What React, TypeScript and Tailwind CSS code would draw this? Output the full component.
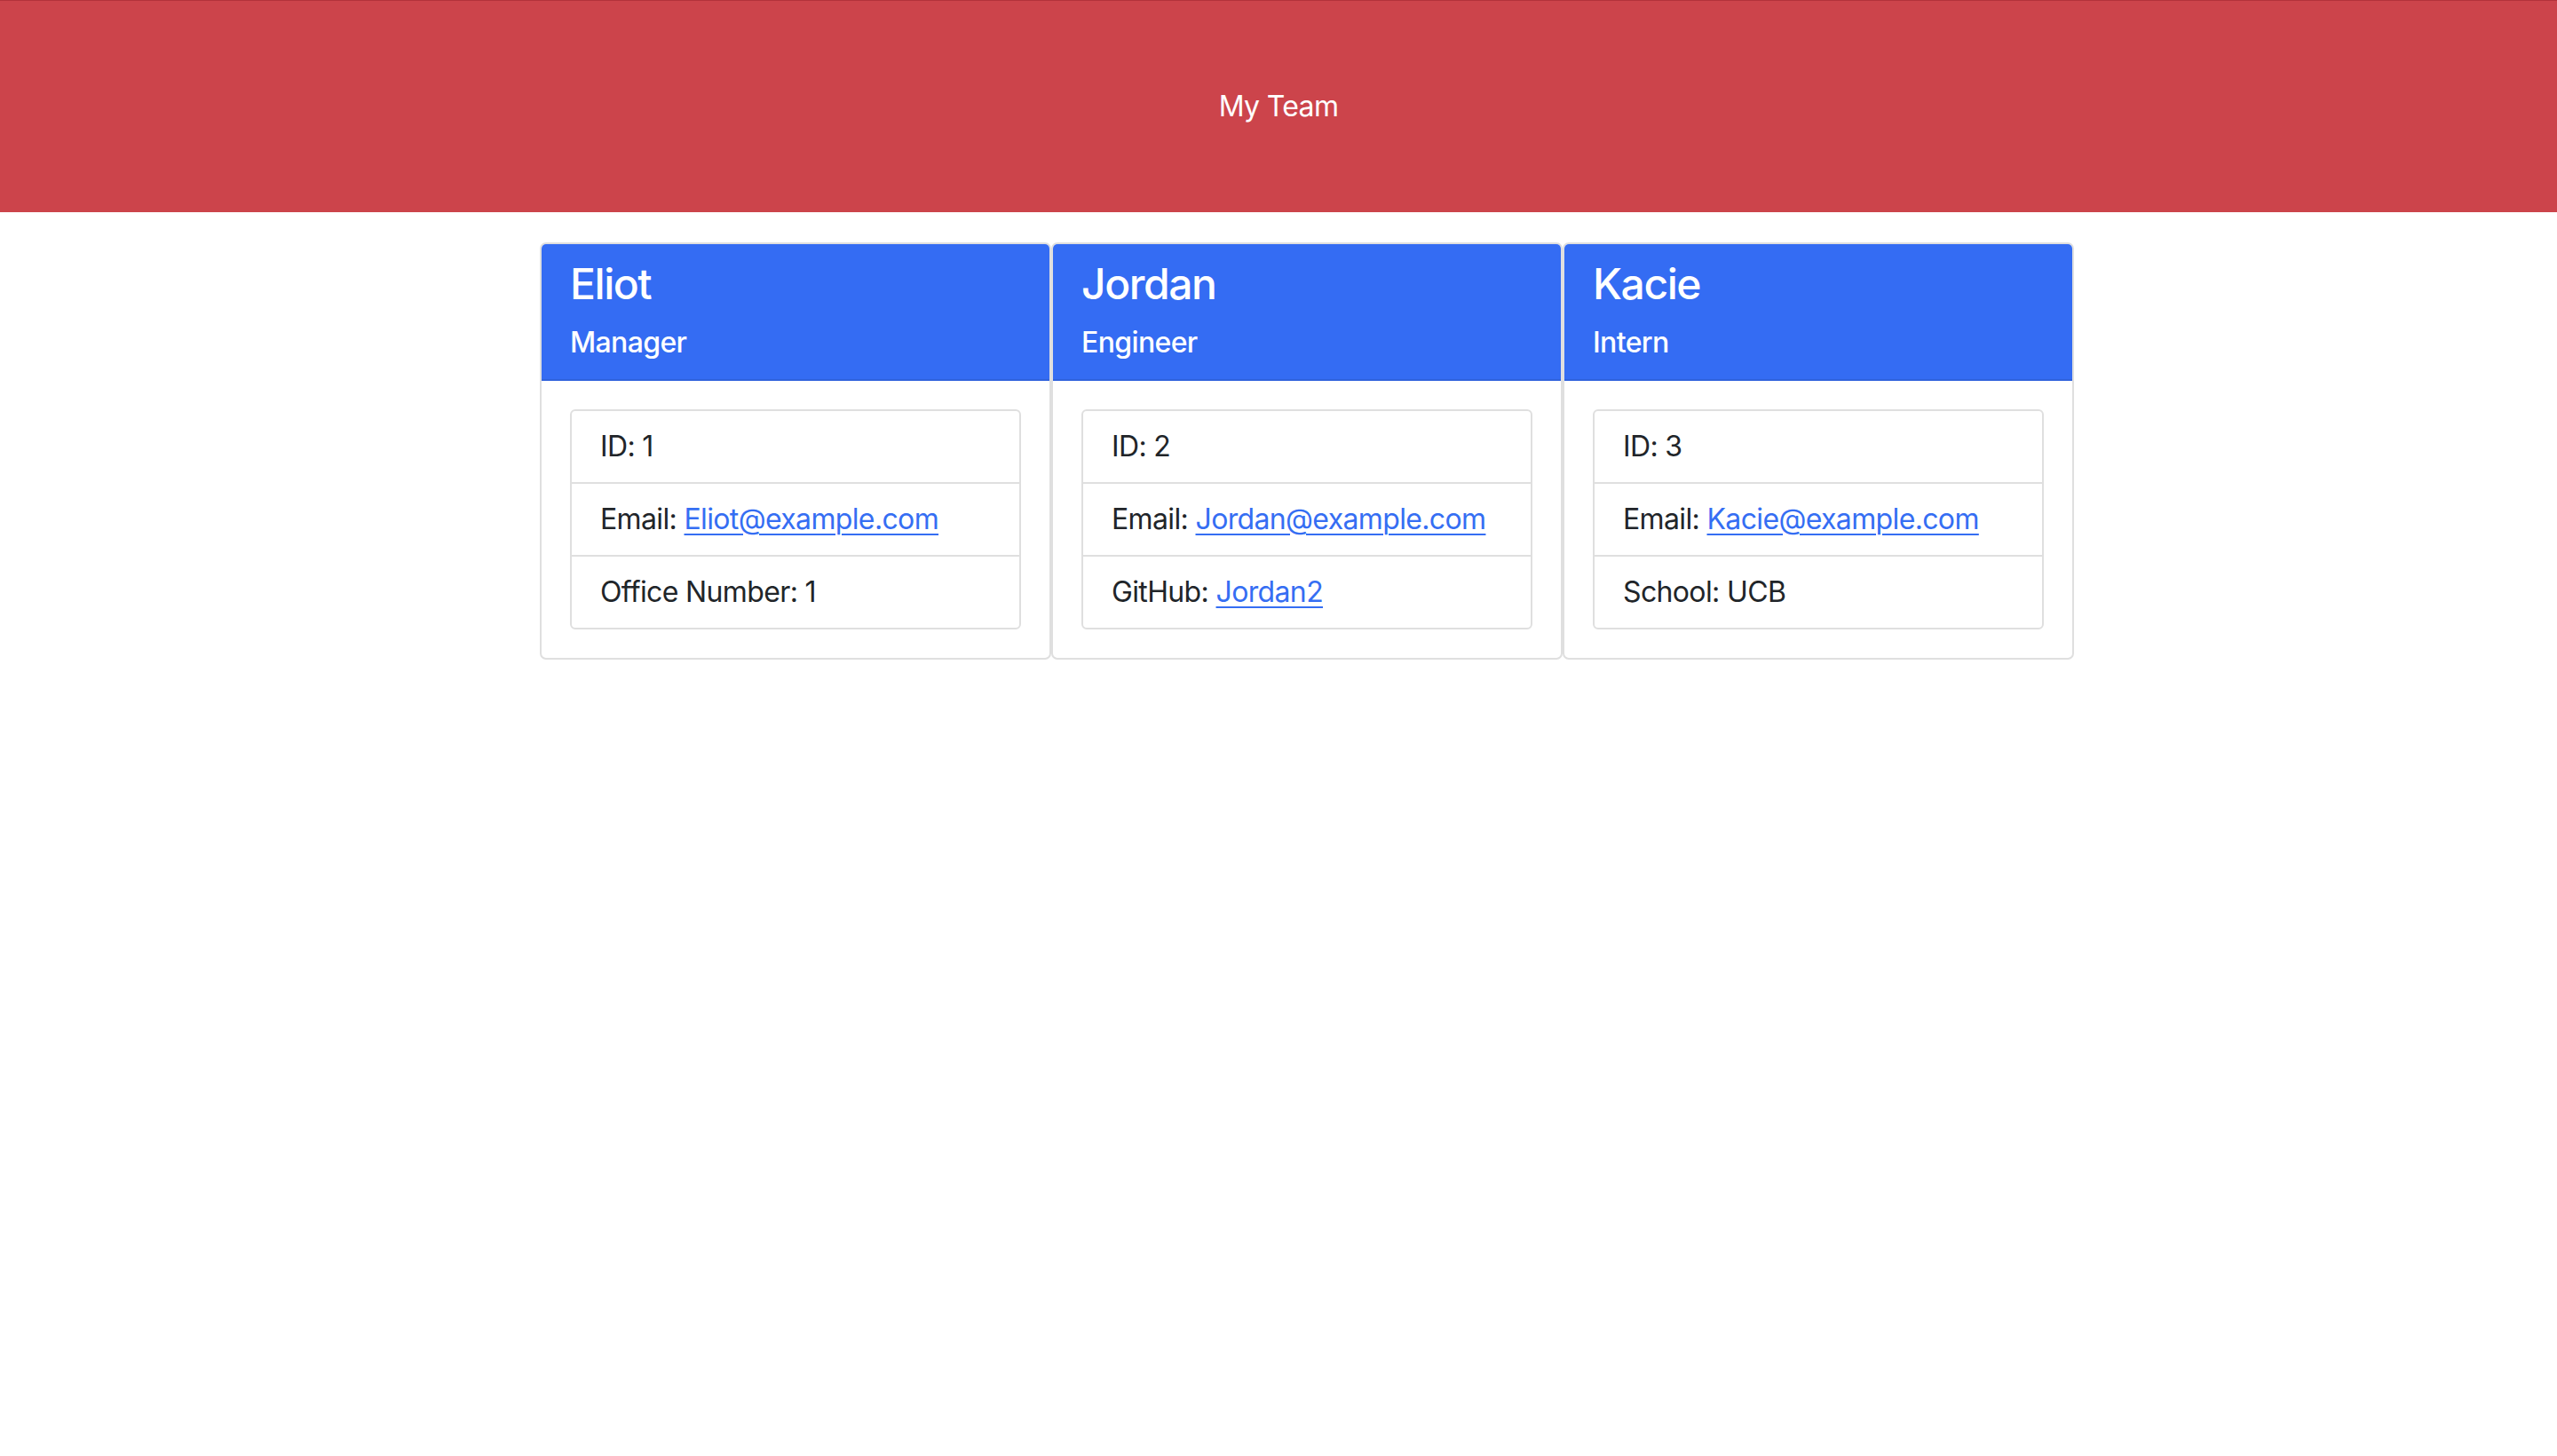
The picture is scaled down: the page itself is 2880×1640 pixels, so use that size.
import React from "react";

type Member = {
  name: string;
  role: string;
  id: number;
  email: string;
  extraLabel: string;
  extraValue: string;
  extraLink?: boolean;
};

const team: Member[] = [
  { name: "Eliot", role: "Manager", id: 1, email: "Eliot@example.com", extraLabel: "Office Number", extraValue: "1" },
  { name: "Jordan", role: "Engineer", id: 2, email: "Jordan@example.com", extraLabel: "GitHub", extraValue: "Jordan2", extraLink: true },
  { name: "Kacie", role: "Intern", id: 3, email: "Kacie@example.com", extraLabel: "School", extraValue: "UCB" },
];

function Card({ m }: { m: Member }) {
  return (
    <div className="w-[576px] shrink-0 border-2 border-[#dfdfdf] rounded-[7px] bg-white overflow-hidden">
      <div className="bg-[#346cf3] text-white px-8 pt-4 pb-[22px] border-b-2 border-[#2f62dc]">
        <h4 className="text-[48px] leading-[58px] font-medium tracking-[-0.03em] mb-[18px]">{m.name}</h4>
        <h6 className="text-[32px] leading-[38px] font-medium tracking-[-0.02em]">{m.role}</h6>
      </div>
      <div className="p-8">
        <ul className="border-2 border-[#dfdfdf] rounded-[6px] text-[#212529] text-[32px] leading-[48px] tracking-[-0.02em]">
          <li className="px-8 py-4">ID: {m.id}</li>
          <li className="px-8 py-4 border-t-2 border-[#dfdfdf]">
            Email:{" "}
            <a href="#" className="text-[#356ef3] underline underline-offset-[5px] decoration-2">
              {m.email}
            </a>
          </li>
          <li className="px-8 py-4 border-t-2 border-[#dfdfdf]">
            {m.extraLabel}:{" "}
            {m.extraLink ? (
              <a href="#" className="text-[#356ef3] underline underline-offset-[5px] decoration-2">
                {m.extraValue}
              </a>
            ) : (
              m.extraValue
            )}
          </li>
        </ul>
      </div>
    </div>
  );
}

export default function App() {
  return (
    <div className="min-h-screen bg-white font-['Inter',sans-serif]">
      <header className="h-[239px] bg-[#cc444b] border-t border-[#b3323a] flex items-center justify-center">
        <span className="text-white text-[32px] tracking-[-0.02em]">My Team</span>
      </header>
      <div className="flex justify-center pl-16 mt-[34px]">
        {team.map((m) => (
          <Card key={m.id} m={m} />
        ))}
      </div>
    </div>
  );
}
